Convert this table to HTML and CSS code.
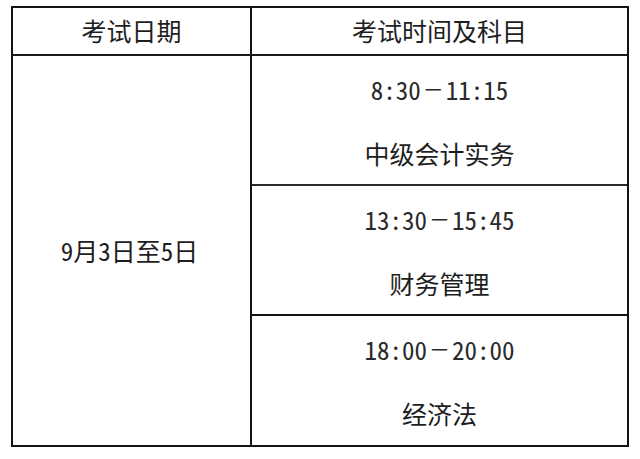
FILE: index.html
```html
<!DOCTYPE html>
<html lang="zh-CN">
<head>
<meta charset="utf-8">
<title>考试时间</title>
<link rel="stylesheet" href="styles.css">
</head>
<body>
<div class="schedule">
  <div class="cell head head-left">考试日期</div>
  <div class="cell head head-right">考试时间及科目</div>
  <div class="cell date">9月3日至5日</div>
  <div class="cell slot slot-1">
    <div class="line time">8:30<span class="dash">－</span>11:15</div>
    <div class="line subject">中级会计实务</div>
  </div>
  <div class="cell slot slot-2">
    <div class="line time">13:30<span class="dash">－</span>15:45</div>
    <div class="line subject">财务管理</div>
  </div>
  <div class="cell slot slot-3">
    <div class="line time">18:00<span class="dash">－</span>20:00</div>
    <div class="line subject">经济法</div>
  </div>
</div>
</body>
</html>
```

FILE: styles.css
```css
* { box-sizing: border-box; }

html, body {
  margin: 0;
  padding: 0;
  background: #ffffff;
}

body {
  font-family: "Noto Sans CJK SC", "Noto Sans", sans-serif;
  font-feature-settings: "hwid" 1;
  color: #1e1e1e;
  font-size: 25px;
  line-height: 1;
}

.schedule {
  margin: 6px 0 0 11px;
  width: 618px;
  height: 441px;
  border: 2px solid #141414;
  display: grid;
  grid-template-columns: 239px 1fr;
  grid-template-rows: 48px 130px 130px 129px;
}

.cell {
  display: flex;
  align-items: center;
  justify-content: center;
}

.head {
  border-bottom: 2px solid #1a1a1a;
  padding-bottom: 2px;
}

.head-left {
  border-right: 2px solid #141414;
}

.date {
  grid-column: 1;
  grid-row: 2 / 5;
  border-right: 2px solid #141414;
  padding-right: 4px;
}

.slot {
  grid-column: 2;
  flex-direction: column;
  align-items: stretch;
}

.slot-1 { border-bottom: 2px solid #2a2a2a; }
.slot-2 { border-bottom: 2px solid #141414; }

.line {
  flex: 1;
  display: flex;
  align-items: center;
  justify-content: center;
  padding-top: 2px;
}

.time {
  color: #2a2a2a;
  white-space: pre;
}

.dash {
  display: inline-block;
  width: 25px;
  text-align: center;
  font-size: 21px;
  font-feature-settings: normal;
  position: relative;
  top: -1px;
}
```
